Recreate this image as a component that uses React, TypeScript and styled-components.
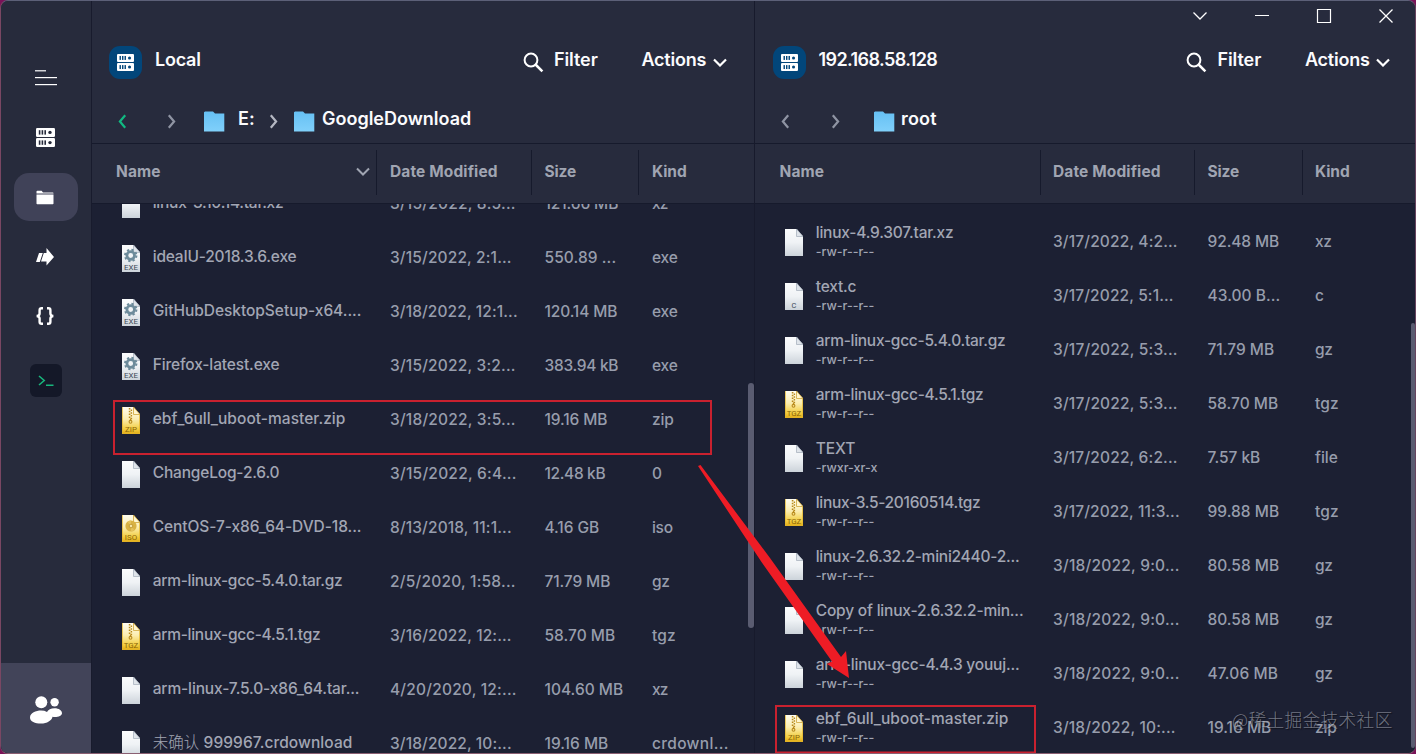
import React, { useLayoutEffect, useRef, useState } from "react";
import styled, { createGlobalStyle, css } from "styled-components";

const Global = createGlobalStyle`
  * { box-sizing: border-box; }
  html, body { margin: 0; padding: 0; background: #7a1258; overflow: hidden; }
  body { font-family: Inter, "Noto Sans CJK SC", sans-serif; font-weight: 500; }
`;

const Window = styled.div`
  position: relative;
  width: 1416px;
  height: 754px;
  display: flex;
  overflow: hidden;
  background: #272b3d;
  border-style: solid;
  border-width: 1px;
  border-color: #5c6078 #67445f #8a5f72 #7a4763;
  border-radius: 8px;
`;

const Sidebar = styled.nav`
  width: 91px;
  flex: none;
  display: flex;
  flex-direction: column;
  align-items: center;
  padding-top: 52px;
  background: #272b3c;
  border-right: 1px solid #181b2d;
`;

const NavItem = styled.div<{ $active?: boolean; $h?: number }>`
  width: 64px;
  height: ${(p) => p.$h ?? 48}px;
  margin-bottom: 12px;
  padding-right: 2px;
  flex: none;
  display: flex;
  align-items: center;
  justify-content: center;
  border-radius: 15px;
  background: ${(p) => (p.$active ? "#404258" : "transparent")};
`;

const TerminalTile = styled.div`
  width: 32px;
  height: 33px;
  margin-top: 13px;
  border-radius: 6px;
  background: #141828;
  display: flex;
  align-items: center;
  justify-content: center;
`;

const Account = styled.div`
  width: 100%;
  height: 90px;
  margin-top: auto;
  padding-top: 3px;
  background: #424459;
  display: flex;
  align-items: center;
  justify-content: center;
`;

const Pane = styled.section<{ $w: number; $last?: boolean }>`
  width: ${(p) => p.$w}px;
  flex: none;
  display: flex;
  flex-direction: column;
  position: relative;
  ${(p) => !p.$last && css`border-right: 1px solid #171a2c;`}
`;

const PaneHead = styled.header`
  height: 143px;
  flex: none;
  background: #272b3d;
  border-bottom: 1px solid #161a2c;
  padding-top: 44px;
`;

const TitleRow = styled.div<{ $pl: number }>`
  display: flex;
  height: 34px;
  align-items: center;
  padding-left: ${(p) => p.$pl}px;
`;

const Badge = styled.div`
  width: 33px;
  height: 33px;
  border-radius: 11px;
  background: #02467a;
  display: flex;
  align-items: center;
  justify-content: center;
  margin-right: 13px;
`;

const HeadText = styled.span<{ $w: number }>`
  width: ${(p) => p.$w}px;
  font-size: 18px;
  font-weight: 560;
  line-height: 26px;
  margin-top: -4px;
  color: #fbfbfd;
  white-space: nowrap;
`;

const Spacer = styled.div`
  flex: 1;
`;

const HeadAction = styled.div<{ $gap: number; $right: number }>`
  display: flex;
  align-items: center;
  gap: ${(p) => p.$gap}px;
  margin-right: ${(p) => p.$right}px;
`;

const Crumbs = styled.div`
  display: flex;
  align-items: center;
  height: 26px;
  margin-top: 29px;
  padding-left: 26px;
`;

const CrumbCell = styled.div<{ $mr: number }>`
  display: flex;
  align-items: center;
  margin-right: ${(p) => p.$mr}px;
`;

const ColumnRow = styled.div<{ $cols: string }>`
  display: grid;
  grid-template-columns: ${(p) => p.$cols};
  height: 60px;
  flex: none;
  padding: 6px 0 8px;
  background: #272b3d;
  border-bottom: 1px solid #161a2c;
`;

const ColumnCell = styled.div<{ $pl: number }>`
  padding: 0 6px 2px ${(p) => p.$pl}px;
  display: flex;
  align-items: center;
  justify-content: space-between;
  font-size: 15.5px;
  font-weight: 660;
  color: #a0a5b2;
  white-space: nowrap;
  &:not(:last-child) { border-right: 1px solid #161a2c; }
`;

const List = styled.div<{ $pad: number }>`
  flex: 1;
  min-height: 0;
  overflow: hidden;
  background: #1c2033;
  padding-top: ${(p) => p.$pad}px;
`;

const Rows = styled.div<{ $shift: number }>`
  margin-top: ${(p) => p.$shift}px;
`;

const Row = styled.div<{ $cols: string }>`
  display: grid;
  grid-template-columns: ${(p) => p.$cols};
  height: 54px;
  align-items: center;
  font-size: 15.5px;
  font-weight: 550;
  line-height: 20px;
  color: #979dac;
  white-space: nowrap;
`;

const NameCell = styled.div`
  display: flex;
  align-items: center;
  padding-left: 30px;
  gap: 13px;
  color: #a2a6b4;
`;

const NameText = styled.div<{ $two: boolean }>`
  margin-top: ${(p) => (p.$two ? -1 : -2)}px;
  margin-left: -0.3px;
`;

const Perm = styled.div`
  font-size: 12.5px;
  line-height: 17px;
`;

const Cell = styled.div<{ $pl: number }>`
  padding-left: ${(p) => p.$pl}px;
`;

const Han = styled.span`
  font-family: "Noto Sans CJK SC", sans-serif;
  font-weight: 300;
  line-height: 1;
`;

const Thumb = styled.div<{ $top: number; $h: number; $right: number; $w: number }>`
  position: absolute;
  right: ${(p) => p.$right}px;
  top: ${(p) => p.$top}px;
  width: ${(p) => p.$w}px;
  height: ${(p) => p.$h}px;
  border-radius: 3px;
  background: #5a5c71;
`;

const WindowButtons = styled.div`
  position: absolute;
  top: 7px;
  right: 21px;
  display: flex;
  gap: 46px;
`;

const Marks = styled.svg`
  position: absolute;
  left: -1px;
  top: -1px;
  pointer-events: none;
`;

const Watermark = styled.div`
  position: absolute;
  left: 1231px;
  top: 705px;
  font-family: "Noto Sans CJK SC", sans-serif;
  font-weight: 300;
  font-size: 17.7px;
  line-height: 26px;
  color: rgba(205, 207, 216, 0.5);
  text-shadow: 1px 1px 1px rgba(0, 0, 0, 0.5);
  white-space: nowrap;
`;

const Spaced = styled.span`
  display: inline-block;
  white-space: pre;
`;

/** Text tracked so that it spans a given width. */
function Fit({ w, children }: { w?: number; children: React.ReactNode }) {
  const ref = useRef<HTMLSpanElement>(null);
  const [tracking, setTracking] = useState(0);
  useLayoutEffect(() => {
    const el = ref.current;
    if (!el || !w) return;
    const count = (el.textContent ?? "").length;
    setTracking((w + 0.7 - el.getBoundingClientRect().width) / count);
  }, [w]);
  return (
    <Spaced ref={ref} style={{ letterSpacing: tracking }}>
      {children}
    </Spaced>
  );
}

function ServerIcon({ size, hole }: { size: number; hole: string }) {
  return (
    <svg width={size} height={size} viewBox="0 0 19 19">
      <rect x="0" y="0" width="19" height="9" rx="1.2" fill="#fff" />
      <rect x="0" y="10" width="19" height="9" rx="1.2" fill="#fff" />
      {[2.2, 12.4].map((y) => (
        <g key={y} fill={hole}>
          <rect x="2.8" y={y} width="1.6" height="4.4" />
          <rect x="5.6" y={y} width="1.6" height="4.4" />
          <rect x="8.4" y={y} width="1.6" height="4.4" />
          <circle cx="14" cy={y + 2.2} r="1.7" />
        </g>
      ))}
    </svg>
  );
}

function Chevron({ dir, color = "#fff", sw = 2.2 }: { dir: "left" | "right" | "down"; color?: string; sw?: number }) {
  const d = { left: "M7.2 1.2 1.9 7.5 7.2 13.8", right: "M1.8 1.2 7.100 7.5 1.8 13.8", down: "M1 1.5 7 7.5 13 1.5" }[dir];
  const down = dir === "down";
  return (
    <svg width={down ? 14 : 9} height={down ? 9 : 15} viewBox={down ? "0 0 14 9" : "0 0 9 15"}>
      <path d={d} fill="none" stroke={color} strokeWidth={sw} />
    </svg>
  );
}

function FolderBlue() {
  return (
    <svg width="21" height="21" viewBox="0 0 21 21">
      <defs>
        <linearGradient id="folder" x1="0" y1="0" x2="0" y2="1">
          <stop offset="0" stopColor="#66c0f3" />
          <stop offset="1" stopColor="#80d0fb" />
        </linearGradient>
      </defs>
      <path d="M0 1.2 1 .5H9L11 2.5H20.3V20.5H0Z" fill="url(#folder)" />
    </svg>
  );
}

function SearchIcon() {
  return (
    <svg width="21" height="21" viewBox="0 0 21 21" fill="none" stroke="#fff">
      <circle cx="8" cy="8" r="6.4" strokeWidth="2" />
      <path d="M12.5 12.5 19.4 19.4" strokeWidth="2.5" />
    </svg>
  );
}

type FileKind = "blank" | "exe" | "zip" | "tgz" | "iso" | "c";

function FileIcon({ kind }: { kind: FileKind }) {
  const gold = kind === "zip" || kind === "tgz" || kind === "iso";
  const label = kind === "blank" ? "" : kind.toUpperCase();
  return (
    <svg width="18" height="27" viewBox="0 0 18 27">
      <defs>
        <linearGradient id="paper" x1="0" y1="0" x2="0" y2="1">
          <stop offset="0" stopColor="#fbfcfd" />
          <stop offset=".5" stopColor="#eff2f5" />
          <stop offset="1" stopColor="#ccd3da" />
        </linearGradient>
        <linearGradient id="gold" x1="0" y1="0" x2="0" y2="1">
          <stop offset="0" stopColor="#fffdf0" />
          <stop offset=".45" stopColor="#fbedb0" />
          <stop offset=".8" stopColor="#f3cf45" />
          <stop offset="1" stopColor="#e0ab14" />
        </linearGradient>
      </defs>
      <path d="M0 0H11.5L18 7.5V27H0Z" fill={gold ? "url(#gold)" : "url(#paper)"} />
      {gold && <path d="M.4 0V26.6H17.6V7.5" fill="none" stroke="#e2b52c" strokeWidth=".8" />}
      <path d="M11.5 0V7.5H18Z" fill={gold ? "#fff6cf" : "#dfe4ea"} stroke={gold ? "#cfa63a" : "#a9b2bf"} strokeWidth=".8" />
      {kind === "exe" && (
        <g fill="none" stroke="#6d8b9b">
          <circle cx="8.7" cy="10.5" r="3.8" strokeWidth="2.8" />
          <circle cx="8.7" cy="10.5" r="5.7" strokeWidth="2" strokeDasharray="2.24 2.24" />
        </g>
      )}
      {(kind === "zip" || kind === "tgz") && (
        <g stroke="#b88a1c" fill="none">
          <path d="M7.6 1V12" strokeWidth="1.6" strokeDasharray="1.5 1.3" />
          <path d="M9.4 2.4V12" strokeWidth="1.4" strokeDasharray="1.5 1.3" />
          <path d="M8.6 11.5V13" strokeWidth="1.5" />
          <circle cx="8.5" cy="14.8" r="1.4" strokeWidth="1.1" />
        </g>
      )}
      {kind === "iso" && (
        <g>
          <circle cx="9" cy="11" r="5.6" fill="#d9b244" />
          <path d="M9 11 5.5 6.8A5.4 5.4 0 0 1 9 5.6ZM9 11l3.6 4A5.4 5.4 0 0 1 9 16.4Z" fill="#e3c15c" />
          <circle cx="9" cy="11" r="1.8" fill="#f6e6a6" stroke="#b38a20" strokeWidth=".7" />
        </g>
      )}
      {label && (
        <text
          x="9"
          y="25"
          textAnchor="middle"
          fontFamily="Roboto, sans-serif"
          fontSize={kind === "c" ? 7.4 : 7.9}
          fontWeight="400"
          fill={gold ? "#8a6508" : "#3c4956"}
        >
          {label}
        </text>
      )}
    </svg>
  );
}

interface Item {
  icon: FileKind;
  name: string;
  w: number;
  perm?: string;
  date: string;
  dw: number;
  size: string;
  sw: number;
  kind: string;
  kw: number;
}

const localFiles: Item[] = [
  { icon: "blank", name: "linux-3.10.14.tar.xz", w: 130, date: "3/15/2022, 8:5...", dw: 125, size: "121.66 MB", sw: 73, kind: "xz", kw: 15 },
  { icon: "exe", name: "ideaIU-2018.3.6.exe", w: 143, date: "3/15/2022, 2:1...", dw: 121, size: "550.89 ...", sw: 71, kind: "exe", kw: 25 },
  { icon: "exe", name: "GitHubDesktopSetup-x64....", w: 208, date: "3/18/2022, 12:1...", dw: 127, size: "120.14 MB", sw: 72, kind: "exe", kw: 25 },
  { icon: "exe", name: "Firefox-latest.exe", w: 126, date: "3/15/2022, 3:2...", dw: 125, size: "383.94 kB", sw: 73, kind: "exe", kw: 25 },
  { icon: "zip", name: "ebf_6ull_uboot-master.zip", w: 192, date: "3/18/2022, 3:5...", dw: 125, size: "19.16 MB", sw: 62, kind: "zip", kw: 21 },
  { icon: "blank", name: "ChangeLog-2.6.0", w: 126, date: "3/15/2022, 6:4...", dw: 126, size: "12.48 kB", sw: 60, kind: "0", kw: 10 },
  { icon: "iso", name: "CentOS-7-x86_64-DVD-18...", w: 208, date: "8/13/2018, 11:1...", dw: 121, size: "4.16 GB", sw: 54, kind: "iso", kw: 20 },
  { icon: "blank", name: "arm-linux-gcc-5.4.0.tar.gz", w: 189, date: "2/5/2020, 1:58...", dw: 125, size: "71.79 MB", sw: 65, kind: "gz", kw: 17 },
  { icon: "tgz", name: "arm-linux-gcc-4.5.1.tgz", w: 167, date: "3/16/2022, 12:...", dw: 121, size: "58.70 MB", sw: 70, kind: "tgz", kw: 23 },
  { icon: "blank", name: "arm-linux-7.5.0-x86_64.tar...", w: 206, date: "4/20/2020, 12:...", dw: 126, size: "104.60 MB", sw: 78, kind: "xz", kw: 15 },
  { icon: "blank", name: "未确认 999967.crdownload", w: 199, date: "3/18/2022, 10:...", dw: 121, size: "19.16 MB", sw: 63, kind: "crdownl...", kw: 76 },
];

const p = "-rw-r--r--";
const remoteFiles: Item[] = [
  { icon: "blank", name: "linux-4.9.307.tar.xz", w: 137, perm: p, date: "3/17/2022, 4:2...", dw: 124, size: "92.48 MB", sw: 71, kind: "xz", kw: 16 },
  { icon: "c", name: "text.c", w: 40, perm: p, date: "3/17/2022, 5:1...", dw: 120, size: "43.00 B...", sw: 72, kind: "c", kw: 8 },
  { icon: "blank", name: "arm-linux-gcc-5.4.0.tar.gz", w: 189, perm: p, date: "3/17/2022, 5:3...", dw: 124, size: "71.79 MB", sw: 66, kind: "gz", kw: 17 },
  { icon: "tgz", name: "arm-linux-gcc-4.5.1.tgz", w: 167, perm: p, date: "3/17/2022, 5:3...", dw: 124, size: "58.70 MB", sw: 70, kind: "tgz", kw: 23 },
  { icon: "blank", name: "TEXT", w: 39, perm: "-rwxr-xr-x", date: "3/17/2022, 6:2...", dw: 124, size: "7.57 kB", sw: 52, kind: "file", kw: 22 },
  { icon: "tgz", name: "linux-3.5-20160514.tgz", w: 164, perm: p, date: "3/17/2022, 11:3...", dw: 126, size: "99.88 MB", sw: 71, kind: "tgz", kw: 23 },
  { icon: "blank", name: "linux-2.6.32.2-mini2440-2...", w: 203, perm: p, date: "3/18/2022, 9:0...", dw: 126, size: "80.58 MB", sw: 71, kind: "gz", kw: 17 },
  { icon: "blank", name: "Copy of linux-2.6.32.2-min...", w: 207, perm: p, date: "3/18/2022, 9:0...", dw: 126, size: "80.58 MB", sw: 71, kind: "gz", kw: 17 },
  { icon: "blank", name: "arm-linux-gcc-4.4.3 youuj...", w: 203, perm: p, date: "3/18/2022, 9:0...", dw: 126, size: "47.06 MB", sw: 70, kind: "gz", kw: 17 },
  { icon: "zip", name: "ebf_6ull_uboot-master.zip", w: 192, perm: p, date: "3/18/2022, 10:...", dw: 122, size: "19.16 MB", sw: 63, kind: "zip", kw: 21 },
];

function renderName(name: string) {
  const han = name.match(/^[\u4e00-\u9fff]+/);
  if (!han) return name;
  return (
    <>
      <Han>{han[0]}</Han>
      {name.slice(han[0].length)}
    </>
  );
}

function FileRows({ items, cols, inset }: { items: Item[]; cols: string; inset: number }) {
  return (
    <>
      {items.map((f, i) => (
        <Row key={i} $cols={cols}>
          <NameCell>
            <FileIcon kind={f.icon} />
            <NameText $two={!!f.perm}>
              <Fit w={f.w}>{renderName(f.name)}</Fit>
              {f.perm && (
                <Perm>
                  <Fit w={f.perm === p ? 58 : 61}>{f.perm}</Fit>
                </Perm>
              )}
            </NameText>
          </NameCell>
          <Cell $pl={inset}><Fit w={f.dw}>{f.date}</Fit></Cell>
          <Cell $pl={12.5}><Fit w={f.sw}>{f.size}</Fit></Cell>
          <Cell $pl={inset}><Fit w={f.kw}>{f.kind}</Fit></Cell>
        </Row>
      ))}
    </>
  );
}

function Title({ name, w, inset, end }: { name: string; w: number; inset: number; end: number }) {
  return (
    <TitleRow $pl={inset}>
      <Badge><ServerIcon size={17} hole="#02467a" /></Badge>
      <HeadText $w={w}><Fit w={w}>{name}</Fit></HeadText>
      <Spacer />
      <HeadAction $gap={10.5} $right={44}>
        <SearchIcon />
        <HeadText $w={43.5}><Fit w={43}>Filter</Fit></HeadText>
      </HeadAction>
      <HeadAction $gap={6.5} $right={end}>
        <HeadText $w={64.5}><Fit w={64}>Actions</Fit></HeadText>
        <Chevron dir="down" />
      </HeadAction>
    </TitleRow>
  );
}

function Columns({ cols, sorted }: { cols: string; sorted?: boolean }) {
  const inset = sorted ? 13 : 12;
  return (
    <ColumnRow $cols={cols}>
      <ColumnCell $pl={sorted ? 24 : 24.5}>
        <Fit w={44}>Name</Fit>
        {sorted && <Chevron dir="down" color="#a0a5b2" sw={2} />}
      </ColumnCell>
      <ColumnCell $pl={inset}><Fit w={107}>Date Modified</Fit></ColumnCell>
      <ColumnCell $pl={12.5}><Fit w={31}>Size</Fit></ColumnCell>
      <ColumnCell $pl={inset}><Fit w={34}>Kind</Fit></ColumnCell>
    </ColumnRow>
  );
}

const localCols = "285px 155px 107px 1fr";
const remoteCols = "286px 154px 108px 1fr";

export default function App() {
  return (
    <>
      <Global />
      <Window>
        <Sidebar>
          <NavItem>
            <svg width="24" height="18" viewBox="0 0 24 18" fill="#fff">
              <rect x="2" y="2" width="11" height="1.5" opacity=".8" />
              <rect x="2" y="9" width="22" height="1.2" />
              <rect x="2" y="16" width="22" height="1.2" />
            </svg>
          </NavItem>
          <NavItem><ServerIcon size={19} hole="#272b3c" /></NavItem>
          <NavItem $active>
            <svg width="18" height="15" viewBox="0 0 18 15" fill="#fff">
              <path d="M.5 3V1.6Q.5.8 1.3.8H5.6L7 2.4H16.8Q17.5 2.4 17.5 3.1V3.6H.5ZM.5 4.6H17.5V13.6Q17.5 14.3 16.8 14.3H1.2Q.5 14.3.5 13.6Z" />
            </svg>
          </NavItem>
          <NavItem>
            <svg width="18" height="18" viewBox="0 0 18 18" fill="#fff">
              <path d="M3 5H6.800L3.800 14H0ZM7.800 5H10.500V0L18 9 10.500 17.500V13.500H5Z" />
            </svg>
          </NavItem>
          <NavItem $h={46}>
            <svg width="18" height="18" viewBox="0 0 18 18" fill="none" stroke="#fff" strokeWidth="2.4">
              <path d="M7 1.2H5.5Q3.6 1.2 3.6 3.2V6.4Q3.6 8.5.8 9 3.6 9.5 3.6 11.6V14.8Q3.6 16.8 5.5 16.8H7M11 1.2h1.500Q14.400 1.200 14.400 3.200V6.400Q14.400 8.500 17.200 9 14.400 9.500 14.400 11.600V14.800Q14.400 16.800 12.500 16.800H11" />
            </svg>
          </NavItem>
          <TerminalTile>
            <svg width="16" height="12" viewBox="0 0 16 12" fill="none" stroke="#18b57c" strokeWidth="1.600">
              <path d="M1 1 6.200 5.500 1 10M8 10.300H15.500" />
            </svg>
          </TerminalTile>
          <Account>
            <svg width="32" height="28" viewBox="0 0 32 28" fill="#fff">
              <circle cx="11.300" cy="6.300" r="6" />
              <circle cx="24.600" cy="6.200" r="4.200" />
              <path d="M0 21.500C0 17 6 14.600 11 14.600Q14.500 14.600 17 16C18 13.500 21 12.200 24.500 12.200 29 12.200 32 14.500 32 17.200 32 20 27 21.500 22.500 20.700 21.800 24.500 17 27.600 11 27.600 5 27.600 0 25.500 0 21.500Z" />
            </svg>
          </Account>
        </Sidebar>

        <Pane $w={663}>
          <PaneHead>
            <Title name="Local" w={45} inset={17} end={27.5} />
            <Crumbs>
              <CrumbCell $mr={40}><Chevron dir="left" color="#11b981" /></CrumbCell>
              <CrumbCell $mr={28}><Chevron dir="right" color="#8f94a3" /></CrumbCell>
              <CrumbCell $mr={13}><FolderBlue /></CrumbCell>
              <CrumbCell $mr={15}><HeadText $w={16}><Fit w={16}>E:</Fit></HeadText></CrumbCell>
              <CrumbCell $mr={16}><Chevron dir="right" color="#b4b7c2" /></CrumbCell>
              <CrumbCell $mr={7}><FolderBlue /></CrumbCell>
              <HeadText $w={148}><Fit w={148.5}>GoogleDownload</Fit></HeadText>
            </Crumbs>
          </PaneHead>
          <Columns cols={localCols} sorted />
          <List $pad={0}>
            <Rows $shift={-27}><FileRows items={localFiles} cols={localCols} inset={13} /></Rows>
          </List>
          <Thumb $top={382} $h={245} $right={0} $w={6} />
        </Pane>

        <Pane $w={660} $last>
          <PaneHead>
            <Title name="192.168.58.128" w={118} inset={17.5} end={25} />
            <Crumbs>
              <CrumbCell $mr={41}><Chevron dir="left" color="#8f94a3" /></CrumbCell>
              <CrumbCell $mr={34}><Chevron dir="right" color="#8f94a3" /></CrumbCell>
              <CrumbCell $mr={6}><FolderBlue /></CrumbCell>
              <HeadText $w={35}><Fit w={35}>root</Fit></HeadText>
            </Crumbs>
          </PaneHead>
          <Columns cols={remoteCols} />
          <List $pad={11}>
            <Rows $shift={0}><FileRows items={remoteFiles} cols={remoteCols} inset={12} /></Rows>
          </List>
          <Thumb $top={322} $h={425} $right={0} $w={4} />
        </Pane>

        <WindowButtons>
          <svg width="16" height="16" viewBox="0 0 16 16" fill="none" stroke="#fff" strokeWidth="1.300"><path d="M1.500 4.500 8 11 14.500 4.500" /></svg>
          <svg width="16" height="16" viewBox="0 0 16 16" fill="none" stroke="#fff" strokeWidth="1.200"><path d="M1 7.500H15" /></svg>
          <svg width="16" height="16" viewBox="0 0 16 16" fill="none" stroke="#fff" strokeWidth="1.200"><path d="M1.500 1.500H14.500V14.500H1.500Z" /></svg>
          <svg width="16" height="16" viewBox="0 0 16 16" fill="none" stroke="#fff" strokeWidth="1.300"><path d="M1.500 1.500 14.500 14.500M14.500 1.500 1.500 14.500" /></svg>
        </WindowButtons>

        <Marks width="1416" height="754" viewBox="0 0 1416 754">
          <g fill="none" stroke="#c9212f" strokeWidth="2">
            <rect x="114" y="401" width="597" height="53" />
            <rect x="776" y="706" width="259" height="46.500" />
          </g>
          <path d="M698 466 700.500 465 770 558 841 657 846 651 849 678 827 664 832 661.500 761.500 562Z" fill="#ee1c25" />
        </Marks>
        <Watermark><Fit w={160}>@稀土掘金技术社区</Fit></Watermark>
      </Window>
    </>
  );
}
